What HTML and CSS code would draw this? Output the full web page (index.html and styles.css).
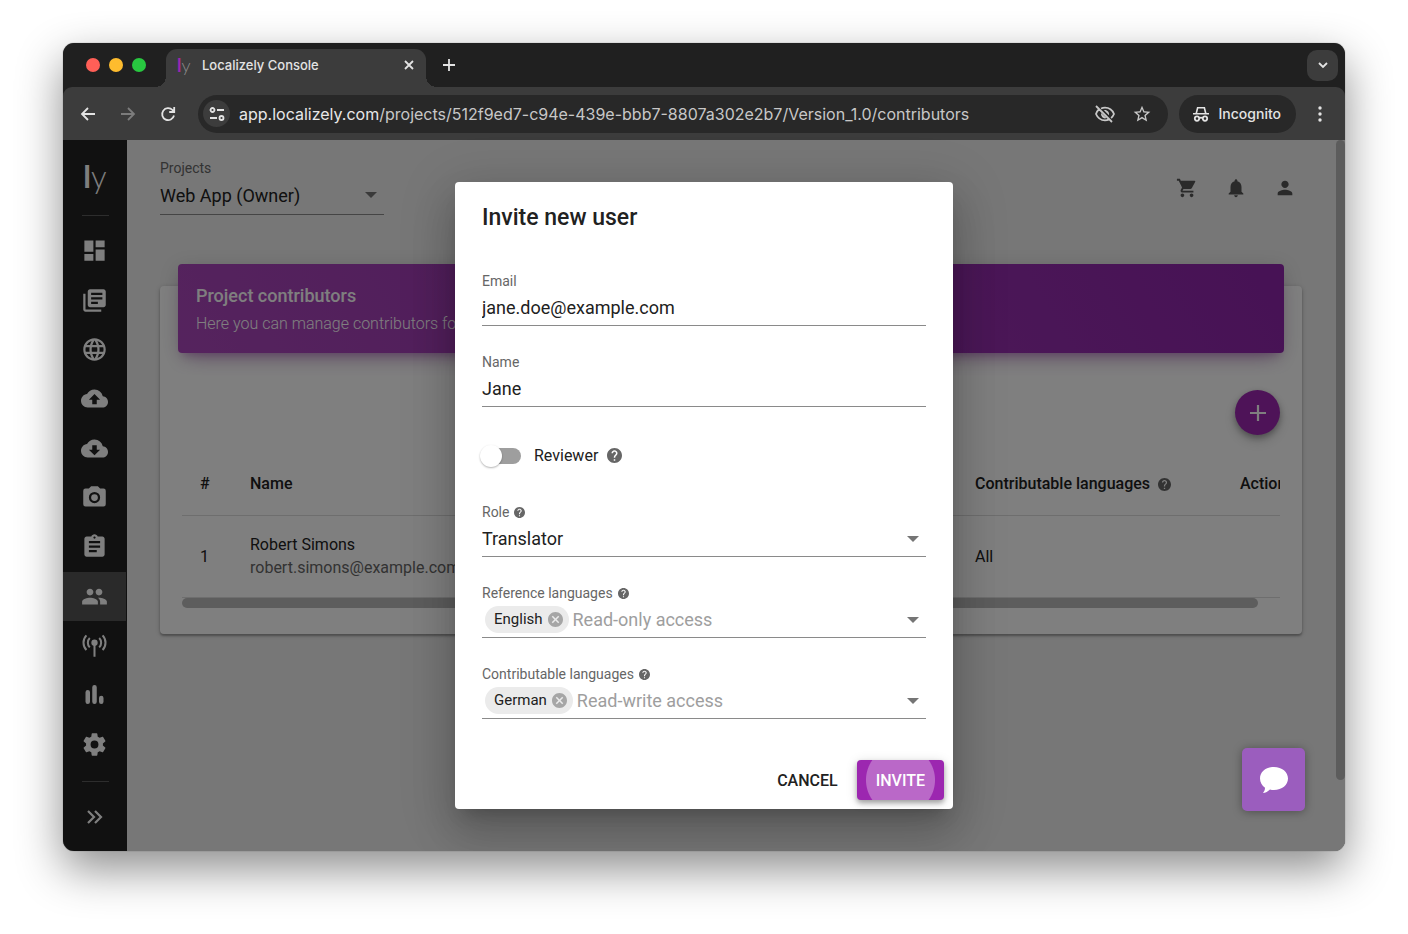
FILE: index.html
```
<!DOCTYPE html>
<html lang="en">
	<head>
		<meta charset="utf-8">
		<title>Localizely Console</title>
		<link rel="stylesheet" href="styles.css">
	</head>
	<body>
		<svg class="sprite" aria-hidden="true">
			<symbol id="help" viewBox="2 2 20 20"><path d="M12 2C6.48 2 2 6.48 2 12s4.48 10 10 10 10-4.48 10-10S17.52 2 12 2zm1 17h-2v-2h2v2zm2.07-7.75l-.9.92C13.45 12.9 13 13.5 13 15h-2v-.5c0-1.1.45-2.1 1.17-2.83l1.24-1.26c.37-.36.59-.86.59-1.41 0-1.1-.9-2-2-2s-2 .9-2 2H8c0-2.21 1.79-4 4-4s4 1.79 4 4c0 .88-.36 1.68-.93 2.25z"/></symbol>
			<symbol id="cancel" viewBox="2 2 20 20"><path d="M12 2C6.47 2 2 6.47 2 12s4.47 10 10 10 10-4.47 10-10S17.53 2 12 2zm5 13.59L15.59 17 12 13.41 8.41 17 7 15.59 10.59 12 7 8.41 8.41 7 12 10.59 15.59 7 17 8.41 13.41 12 17 15.59z"/></symbol>
		</svg>

		<div class="window">
			<div class="tabstrip">
				<div class="lights"><span class="red"></span><span class="yellow"></span><span class="green"></span></div>
				<div class="tab">
					<span class="favicon"><b>l</b><i>y</i></span>
					<span class="tab-title">Localizely Console</span>
					<button class="tab-close" aria-label="Close tab"><svg width="10" height="10" viewBox="0 0 10 10"><path class="line" d="M1 1l8 8M9 1l-8 8"/></svg></button>
				</div>
				<button class="new-tab" aria-label="New tab"><svg width="12" height="12" viewBox="0 0 12 12"><path class="line" d="M6 0v12M0 6h12"/></svg></button>
				<button class="tab-search" aria-label="Search tabs"><svg width="10" height="8" viewBox="0 0 10 8"><path class="line" d="M1 2l4 4 4-4"/></svg></button>
			</div>

			<div class="toolbar">
				<button aria-label="Back"><svg width="16" height="16" viewBox="0 0 16 16"><path class="line" d="M15 8H2M8 2L2 8l6 6"/></svg></button>
				<button class="dim" aria-label="Forward"><svg width="16" height="16" viewBox="0 0 16 16"><path class="line" d="M1 8h13M8 2l6 6-6 6"/></svg></button>
				<button aria-label="Reload"><svg width="16" height="16" viewBox="0 0 16 16"><path class="line" d="M14 9.500A6 6 0 1 1 12.500 4L14 5.500M14.200 1v5h-5"/></svg></button>
				<div class="address">
					<span class="site-info"><svg width="16" height="14" viewBox="0 0 16 14"><g class="line"><circle cx="3.500" cy="3" r="2"/><path d="M8 3h7M1 11h7"/><circle cx="12.500" cy="11" r="2"/></g></svg></span>
					<span class="url"><b>app.localizely.com</b>/projects/512f9ed7-c94e-439e-bbb7-8807a302e2b7/Version_1.0/contributors</span>
					<svg width="22" height="20" viewBox="0 0 22 20"><path class="line" d="M2 2l16 16M7 4.500C8.200 4 9.600 3.700 11 3.700c4 0 7.300 2.200 9 6.300-.7 1.700-1.700 3-2.900 4M4.800 5.500C3.600 6.600 2.600 8.100 2 10c1.700 4.100 5 6.300 9 6.300 1.300 0 2.500-.2 3.600-.7"/><path d="M7.200 9a4 4 0 0 0 5.400 5zM10 6.200l5 5c.6-3-2-5.600-5-5z"/></svg>
					<svg width="20" height="20" viewBox="0 0 24 24"><path d="M22 9.240l-7.190-.62L12 2 9.190 8.630 2 9.240l5.460 4.730L5.820 21 12 17.270 18.180 21l-1.630-7.030L22 9.240zM12 15.400l-3.760 2.270 1-4.280-3.320-2.880 4.380-.38L12 6.100l1.710 4.040 4.380.38-3.320 2.880 1 4.280L12 15.400z"/></svg>
				</div>
				<div class="incognito">
					<svg width="16" height="16" viewBox="0 0 16 16"><path d="M4 1h8l1.500 6H16v1.600H0V7h2.500zm1.300 1.600L4.200 7h7.600l-1.100-4.400z" fill-rule="evenodd"/><g class="line"><circle cx="4" cy="12.600" r="2.200"/><circle cx="12" cy="12.600" r="2.200"/><path d="M6 12.200q2-1 4 0"/></g></svg>
					Incognito
				</div>
				<button class="menu" aria-label="Menu"><svg width="4" height="16" viewBox="0 0 4 16"><circle cx="2" cy="2" r="1.700"/><circle cx="2" cy="8" r="1.700"/><circle cx="2" cy="14" r="1.700"/></svg></button>
			</div>

			<div class="viewport">
				<aside class="sidebar">
					<div class="logo"><b>l</b><i>y</i></div>
					<hr>
					<nav>
						<a href="#" aria-label="Overview"><svg viewBox="0 0 24 24"><path d="M13 3v6h8V3zM13 21h8V11h-8zM3 21h8v-6H3zM3 13h8V3H3z"/></svg></a>
						<a href="#" aria-label="Translations"><svg viewBox="0 0 24 24"><path d="M4 6H2v14c0 1.100.9 2 2 2h14v-2H4V6zm16-4H8c-1.100 0-2 .9-2 2v12c0 1.100.9 2 2 2h12c1.100 0 2-.9 2-2V4c0-1.100-.9-2-2-2zm-1 9H9V9h10v2zm-4 4H9v-2h6v2zm4-8H9V5h10v2z"/></svg></a>
						<a href="#" aria-label="Languages"><svg viewBox="0 0 24 24"><path d="M11.990 2C6.470 2 2 6.480 2 12s4.470 10 9.990 10C17.520 22 22 17.520 22 12S17.520 2 11.990 2zm6.930 6h-2.950c-.32-1.250-.78-2.450-1.380-3.560 1.840.63 3.370 1.910 4.330 3.560zM12 4.040c.83 1.200 1.480 2.530 1.910 3.960h-3.820c.43-1.430 1.080-2.760 1.910-3.960zM4.260 14C4.100 13.360 4 12.690 4 12s.1-1.360.26-2h3.380c-.08.66-.14 1.320-.14 2s.06 1.340.14 2H4.260zm.82 2h2.950c.32 1.250.78 2.450 1.380 3.560-1.840-.63-3.370-1.900-4.330-3.560zm2.950-8H5.080c.96-1.660 2.490-2.930 4.330-3.560C8.810 5.550 8.350 6.750 8.030 8zM12 19.960c-.83-1.200-1.480-2.530-1.910-3.960h3.820c-.43 1.430-1.080 2.760-1.910 3.960zM14.340 14H9.660c-.09-.66-.16-1.320-.16-2s.07-1.350.16-2h4.680c.09.65.16 1.320.16 2s-.07 1.340-.16 2zm.25 5.560c.6-1.110 1.060-2.310 1.380-3.560h2.950c-.96 1.650-2.490 2.930-4.330 3.560zM16.360 14c.08-.66.14-1.320.14-2s-.06-1.340-.14-2h3.380c.16.64.26 1.310.26 2s-.1 1.360-.26 2h-3.380z"/></svg></a>
						<a href="#" aria-label="Upload"><svg viewBox="0 0 24 24"><path d="M19.350 10.040C18.670 6.590 15.640 4 12 4 9.110 4 6.600 5.640 5.350 8.040 2.340 8.360 0 10.910 0 14c0 3.310 2.690 6 6 6h13c2.760 0 5-2.240 5-5 0-2.640-2.050-4.780-4.650-4.960zM14 13v4h-4v-4H7l5-5 5 5h-3z"/></svg></a>
						<a href="#" aria-label="Download"><svg viewBox="0 0 24 24"><path d="M19.350 10.040C18.670 6.590 15.640 4 12 4 9.110 4 6.600 5.640 5.350 8.040 2.340 8.360 0 10.910 0 14c0 3.310 2.690 6 6 6h13c2.760 0 5-2.240 5-5 0-2.640-2.050-4.780-4.650-4.960zM17 13l-5 5-5-5h3V9h4v4h3z"/></svg></a>
						<a href="#" aria-label="Screenshots"><svg viewBox="0 0 24 24"><path fill-rule="evenodd" d="M4 4h3l2-2h6l2 2h3a2 2 0 0 1 2 2v12a2 2 0 0 1-2 2H4a2 2 0 0 1-2-2V6a2 2 0 0 1 2-2zM12 7a5 5 0 1 0 0 10 5 5 0 0 0 0-10zM12 9a3 3 0 1 1 0 6 3 3 0 0 1 0-6z"/></svg></a>
						<a href="#" aria-label="Tasks"><svg viewBox="0 0 24 24"><path d="M19 3h-4.180C14.400 1.840 13.300 1 12 1c-1.300 0-2.400.84-2.820 2H5c-1.100 0-2 .9-2 2v14c0 1.100.9 2 2 2h14c1.100 0 2-.9 2-2V5c0-1.100-.9-2-2-2zm-7 0c.55 0 1 .45 1 1s-.45 1-1 1-1-.45-1-1 .45-1 1-1zm2 14H7v-2h7v2zm3-4H7v-2h10v2zm0-4H7V7h10v2z"/></svg></a>
						<a href="#" class="active" aria-label="Contributors"><svg viewBox="0 0 24 24"><path d="M16 11c1.660 0 2.990-1.340 2.990-3S17.660 5 16 5c-1.660 0-3 1.340-3 3s1.340 3 3 3zm-8 0c1.660 0 2.990-1.340 2.990-3S9.660 5 8 5C6.340 5 5 6.340 5 8s1.340 3 3 3zm0 2c-2.330 0-7 1.170-7 3.500V19h14v-2.500c0-2.330-4.670-3.500-7-3.500zm8 0c-.29 0-.62.02-.97.05 1.160.84 1.970 1.970 1.970 3.450V19h6v-2.500c0-2.330-4.670-3.500-7-3.500z"/></svg></a>
						<a href="#" aria-label="Over-the-air"><svg viewBox="0 0 24 24"><circle cx="12" cy="9.500" r="2.800"/><path class="line" d="M12 10v12M7.800 5.300a6 6 0 0 0 0 8.400M16.200 5.300a6 6 0 0 1 0 8.400M4.800 3a9.500 9.500 0 0 0 0 13M19.200 3a9.500 9.500 0 0 1 0 13"/></svg></a>
						<a href="#" aria-label="Statistics"><svg viewBox="0 0 24 24"><path class="bars" d="M6 10v8.500M12 5.500v13M18 15v3.500"/></svg></a>
						<a href="#" aria-label="Settings"><svg viewBox="0 0 24 24"><path d="M12 15.500A3.500 3.500 0 0 1 8.500 12 3.500 3.500 0 0 1 12 8.500a3.500 3.500 0 0 1 3.500 3.500 3.500 3.500 0 0 1-3.500 3.500m7.430-2.530c.04-.32.07-.64.07-.97s-.03-.66-.07-1l2.110-1.630c.19-.15.24-.42.12-.64l-2-3.460c-.12-.22-.39-.31-.61-.22l-2.490 1c-.52-.39-1.060-.73-1.690-.98l-.37-2.650A.506.506 0 0 0 14 2h-4c-.25 0-.46.18-.5.42l-.37 2.650c-.63.25-1.170.59-1.690.98l-2.490-1c-.22-.09-.49 0-.61.22l-2 3.460c-.13.22-.07.49.12.64L4.570 11c-.04.34-.07.67-.07 1s.03.65.07.97l-2.110 1.660c-.19.15-.25.42-.12.64l2 3.460c.12.22.39.3.61.22l2.490-1.010c.52.4 1.060.74 1.690.99l.37 2.650c.04.24.25.42.5.42h4c.25 0 .46-.18.5-.42l.37-2.650c.63-.26 1.170-.59 1.690-.99l2.490 1.010c.22.08.49 0 .61-.22l2-3.460c.12-.22.07-.49-.12-.64z"/></svg></a>
					</nav>
					<hr>
					<button class="expand" aria-label="Expand sidebar"><svg width="18" height="16" viewBox="0 0 18 16"><path class="line" d="M2 2l6 6-6 6M9 2l6 6-6 6"/></svg></button>
				</aside>

				<main>
					<header>
						<div class="field project">
							<label for="project">Projects</label>
							<div class="control select"><select id="project"><option>Web App (Owner)</option></select></div>
						</div>
						<div class="actions">
							<button aria-label="Cart"><svg width="22" height="22" viewBox="0 0 24 24"><path d="M7 18c-1.100 0-1.990.9-1.990 2S5.900 22 7 22s2-.9 2-2-.9-2-2-2zM1 2v2h2l3.600 7.590-1.350 2.450c-.16.28-.25.61-.25.96 0 1.100.9 2 2 2h12v-2H7.420c-.14 0-.25-.11-.25-.25l.03-.12.9-1.630h7.450c.75 0 1.410-.41 1.750-1.030l3.580-6.490A1.003 1.003 0 0 0 20 4H5.210l-.94-2H1zm16 16c-1.100 0-1.990.9-1.990 2s.89 2 1.990 2 2-.9 2-2-.9-2-2-2z"/></svg></button>
							<button aria-label="Notifications"><svg width="22" height="22" viewBox="0 0 24 24"><path d="M12 22c1.100 0 2-.9 2-2h-4c0 1.100.89 2 2 2zm6-6v-5c0-3.070-1.640-5.640-4.500-6.320V4c0-.83-.67-1.500-1.500-1.500s-1.500.67-1.500 1.500v.68C7.630 5.360 6 7.920 6 11v5l-2 2v1h16v-1l-2-2z"/></svg></button>
							<button aria-label="Account"><svg width="22" height="22" viewBox="0 0 24 24"><path d="M12 12c2.210 0 4-1.790 4-4s-1.790-4-4-4-4 1.790-4 4 1.790 4 4 4zm0 2c-2.670 0-8 1.340-8 4v2h16v-2c0-2.660-5.330-4-8-4z"/></svg></button>
						</div>
					</header>

					<section class="card">
						<div class="banner">
							<h1>Project contributors</h1>
							<p>Here you can manage contributors for your project</p>
						</div>
						<div class="card-body">
							<button class="add" aria-label="Add contributor"><svg width="16" height="16" viewBox="0 0 16 16"><path class="line" d="M8 0v16M0 8h16"/></svg></button>
							<div class="table-wrap">
								<table>
									<thead>
										<tr>
											<th class="col-num">#</th>
											<th>Name</th>
											<th class="col-lang">Contributable languages <svg class="help" width="13" height="13"><use href="#help"/></svg></th>
											<th class="col-actions">Actions</th>
										</tr>
									</thead>
									<tbody>
										<tr>
											<td>1</td>
											<td>Robert Simons<br><span class="email">robert.simons@example.com</span></td>
											<td>All</td>
											<td></td>
										</tr>
									</tbody>
								</table>
							</div>
							<div class="scroll-x"></div>
						</div>
					</section>
				</main>
				<div class="scroll-y"></div>

				<div class="overlay">
					<form class="dialog" role="dialog" aria-labelledby="dialog-title">
						<h2 id="dialog-title">Invite new user</h2>
						<div class="fields">
							<div class="field">
								<label for="email">Email</label>
								<div class="control"><input id="email" type="email" value="jane.doe@example.com"></div>
							</div>
							<div class="field">
								<label for="name">Name</label>
								<div class="control"><input id="name" type="text" value="Jane"></div>
							</div>
							<div class="switch">
								<input id="reviewer" type="checkbox">
								<label for="reviewer">Reviewer</label>
								<svg class="help" width="15" height="15"><use href="#help"/></svg>
							</div>
							<div class="field">
								<label for="role">Role <svg class="help" width="11" height="11"><use href="#help"/></svg></label>
								<div class="control select"><select id="role"><option>Translator</option></select></div>
							</div>
							<div class="field">
								<label for="reference">Reference languages <svg class="help" width="11" height="11"><use href="#help"/></svg></label>
								<div class="control select">
									<span class="chip">English <button type="button" aria-label="Remove English"><svg width="15" height="15"><use href="#cancel"/></svg></button></span>
									<input id="reference" type="text" placeholder="Read-only access">
								</div>
							</div>
							<div class="field">
								<label for="contributable">Contributable languages <svg class="help" width="11" height="11"><use href="#help"/></svg></label>
								<div class="control select">
									<span class="chip">German <button type="button" aria-label="Remove German"><svg width="15" height="15"><use href="#cancel"/></svg></button></span>
									<input id="contributable" type="text" placeholder="Read-write access">
								</div>
							</div>
						</div>
						<div class="buttons">
							<button type="button" class="btn">CANCEL</button>
							<button type="button" class="btn primary">INVITE</button>
						</div>
					</form>
				</div>

				<button class="chat" aria-label="Chat"><svg width="30" height="28" viewBox="0 0 30 28"><path d="M15 1c8 0 14 5 14 11.500S23 24 15 24c-1.500 0-2.800-.1-4-.5-2 2-4.500 3.300-7 3.500 1.200-1.400 2-3 2-5.200C3 19.500 1 16.300 1 12.500 1 6 7 1 15 1z"/></svg></button>
			</div>
		</div>
	</body>
</html>
```
FILE: styles.css
```
* {
	box-sizing: border-box;
}

body {
	margin: 0;
	padding: 43px 63px 83px;
	height: 100vh;
	min-height: 760px;
	background: #fff;
	color: #212121;
	font-family: Roboto, "Liberation Sans", sans-serif;
	font-size: 16px;
}

h1, h2, p {
	margin: 0;
}

button, input, select {
	font: inherit;
	color: inherit;
	background: none;
	border: 0;
	padding: 0;
	margin: 0;
}

input, select {
	appearance: none;
	outline: 0;
	min-width: 0;
}

svg {
	display: block;
	flex: none;
	fill: currentColor;
}

.sprite {
	display: none;
}

.line {
	fill: none;
	stroke: currentColor;
	stroke-width: 1.8;
}

/* browser window */

.window {
	display: flex;
	flex-direction: column;
	height: 100%;
	border-radius: 11px;
	overflow: hidden;
	background: #202020;
	box-shadow: 0 0 1px rgba(0, 0, 0, 0.6), 0 18px 46px rgba(0, 0, 0, 0.45);
}

.tabstrip, .toolbar {
	font-family: Inter, "Liberation Sans", sans-serif;
	color: #e3e3e3;
	display: flex;
	align-items: center;
}

.tabstrip {
	height: 44px;
	padding: 0 7px 0 23px;
}

.lights {
	display: flex;
	gap: 9px;
}

.lights span {
	width: 14px;
	height: 14px;
	border-radius: 50%;
}

.red {
	background: #ff5f57;
}

.yellow {
	background: #febc2e;
}

.green {
	background: #28c840;
}

.tab {
	position: relative;
	display: flex;
	align-items: center;
	align-self: flex-end;
	width: 260px;
	height: 38px;
	margin-left: 20px;
	padding: 0 12px 6px 11px;
	border-radius: 11px 11px 0 0;
	background: #3c3c3c;
}

.tab::before,
.tab::after {
	content: "";
	position: absolute;
	bottom: 0;
	width: 11px;
	height: 11px;
}

.tab::before {
	right: 100%;
	background: radial-gradient(circle at 0 0, transparent 11px, #3c3c3c 11px);
}

.tab::after {
	left: 100%;
	background: radial-gradient(circle at 100% 0, transparent 11px, #3c3c3c 11px);
}

.favicon, .logo {
	font-family: Lato, sans-serif;
}

.favicon b, .logo b {
	font-weight: 700;
}

.favicon i, .logo i {
	font-style: normal;
	font-weight: 300;
}

.favicon {
	width: 25px;
	font-size: 18px;
	line-height: 20px;
	color: #8a8a8a;
}

.favicon b {
	color: #9c27b0;
}

.tab-title {
	flex: 1;
	font-size: 13px;
	font-weight: 500;
}

.new-tab {
	margin-left: 17px;
}

.tab-search {
	display: flex;
	align-items: center;
	justify-content: center;
	width: 31px;
	height: 31px;
	margin-left: auto;
	border-radius: 10px;
	background: #3c3c3c;
}

.toolbar {
	height: 53px;
	padding: 0 20px 0 17px;
	border-radius: 9px 9px 0 0;
	background: #3c3c3c;
	gap: 24px;
}

.dim {
	color: #7c7c7c;
}

.address {
	flex: 1;
	display: flex;
	align-items: center;
	gap: 16px;
	min-width: 0;
	height: 38px;
	margin-left: -2px;
	padding: 0 16px 0 5px;
	border-radius: 19px;
	background: #282828;
	color: #c7c7c7;
}

.site-info {
	display: flex;
	align-items: center;
	justify-content: center;
	flex: none;
	width: 27px;
	height: 27px;
	margin-right: -7px;
	border-radius: 50%;
	background: #3c3c3c;
	color: #e3e3e3;
}

.url {
	flex: 1;
	font-size: 16px;
	white-space: nowrap;
	overflow: hidden;
}

.url b {
	font-weight: 400;
	color: #e8e8e8;
}

.incognito {
	display: flex;
	align-items: center;
	gap: 10px;
	height: 38px;
	margin-left: -13px;
	padding: 0 15px 0 14px;
	border-radius: 19px;
	background: #282828;
	font-size: 14px;
	font-weight: 500;
}

.menu {
	width: 9px;
	margin-left: -4px;
	padding-left: 2px;
}

/* app */

.viewport {
	position: relative;
	flex: 1;
	display: flex;
	min-height: 0;
	background: #eee;
}

.sidebar {
	flex: none;
	display: flex;
	flex-direction: column;
	width: 64px;
	background: #222;
	color: #fff;
}

.sidebar hr {
	width: 27px;
	height: 1px;
	margin: 0 auto;
	border: 0;
	background: #5a5a5a;
}

.logo {
	height: 75px;
	font-size: 31px;
	line-height: 72px;
	text-align: center;
}

.sidebar nav {
	flex: 1;
	display: flex;
	flex-direction: column;
	padding: 10px 0 12px;
}

.sidebar nav a {
	flex: 1;
	display: flex;
	align-items: center;
	justify-content: center;
	margin-right: 1px;
	color: #fff;
}

.sidebar nav svg {
	width: 27px;
	height: 27px;
}

.sidebar nav .active {
	background: #555;
}

.bars {
	fill: none;
	stroke: currentColor;
	stroke-width: 4;
	stroke-linecap: round;
}

.expand {
	height: 69px;
	margin: 0 auto;
}

.expand .line {
	stroke-width: 2.2;
}

main {
	flex: 1;
	min-width: 0;
	padding: 20px 34px 0 33px;
}

header {
	display: flex;
	justify-content: space-between;
	align-items: center;
}

.actions {
	display: flex;
	gap: 15px;
	color: #555;
}

.actions button {
	display: flex;
	justify-content: center;
	width: 34px;
}

.field label {
	display: flex;
	align-items: center;
	gap: 5px;
	font-size: 14px;
	line-height: 16px;
	color: #666;
}

.help {
	color: #666;
}

.control {
	position: relative;
	display: flex;
	align-items: center;
	height: 37px;
	border-bottom: 1px solid #8a8a8a;
	font-size: 18px;
}

.control input,
.control select {
	flex: 1;
	height: 36px;
}

.control input::placeholder {
	color: #9e9e9e;
	opacity: 1;
}

.select::after {
	content: "";
	position: absolute;
	right: 7px;
	top: 16px;
	border: 6px solid transparent;
	border-top-color: #757575;
	border-bottom: 0;
	pointer-events: none;
}

.project {
	width: 224px;
}

.project .control {
	height: 39px;
}

.card {
	margin-top: 71px;
	border-radius: 4px;
	background: #fff;
	box-shadow: 0 2px 2px rgba(0, 0, 0, 0.25), 0 1px 5px rgba(0, 0, 0, 0.2);
}

.banner {
	position: relative;
	top: -22px;
	height: 89px;
	margin: 0 18px -22px;
	padding: 18px;
	border-radius: 4px;
	background: linear-gradient(60deg, #ab47bc, #8e24aa);
	box-shadow: 0 12px 20px -10px rgba(156, 39, 176, 0.4), 0 4px 20px rgba(0, 0, 0, 0.14), 0 7px 8px -5px rgba(156, 39, 176, 0.3);
	color: #fff;
	white-space: nowrap;
	overflow: hidden;
}

.banner h1 {
	font-size: 18px;
	font-weight: 500;
	line-height: 28px;
}

.banner p {
	font-size: 16px;
	font-weight: 300;
	line-height: 28px;
}

.card-body {
	display: flex;
	flex-direction: column;
	padding: 37px 22px 26px;
}

.add {
	align-self: flex-end;
	display: flex;
	align-items: center;
	justify-content: center;
	width: 45px;
	height: 45px;
	margin-bottom: 17px;
	border-radius: 50%;
	background: #9c27b0;
	box-shadow: 0 3px 6px rgba(0, 0, 0, 0.3), 0 6px 14px rgba(0, 0, 0, 0.15);
	color: #fff;
}

.add .line {
	stroke-width: 2.2;
}

.table-wrap {
	overflow: hidden;
}

table {
	width: calc(100% + 26px);
	table-layout: fixed;
	border-collapse: collapse;
	white-space: nowrap;
	line-height: 23px;
}

th, td {
	padding: 0 18px;
	border-bottom: 1px solid #ddd;
	text-align: left;
}

th {
	height: 63px;
	font-weight: 500;
}

td {
	height: 82px;
}

th .help {
	display: inline-block;
	vertical-align: -2px;
	margin-left: 4px;
}

.col-num {
	width: 50px;
}

.col-lang {
	width: 265px;
}

.col-actions {
	width: 84px;
}

.email {
	color: #666;
}

.scroll-x {
	width: 98%;
	height: 10px;
	border-radius: 5px;
	background: #bbb;
}

.scroll-y {
	width: 9px;
	height: 90%;
	border-radius: 5px;
	background: #b8b8b8;
}

/* dialog */

.overlay {
	position: absolute;
	inset: 0;
	display: flex;
	align-items: center;
	justify-content: center;
	background: rgba(0, 0, 0, 0.5);
}

.dialog {
	width: 498px;
	max-width: 90%;
	padding: 20px 9px 9px 27px;
	border-radius: 4px;
	background: #fff;
	box-shadow: 0 12px 17px -8px rgba(0, 0, 0, 0.2), 0 27px 43px 3px rgba(0, 0, 0, 0.14), 0 10px 52px 9px rgba(0, 0, 0, 0.12);
}

.dialog h2 {
	margin-bottom: 39px;
	font-size: 23px;
	font-weight: 500;
	line-height: 32px;
}

.fields {
	display: flex;
	flex-direction: column;
	gap: 28px;
	margin-right: 18px;
}

.switch {
	display: flex;
	align-items: center;
	height: 41px;
}

.switch input {
	position: relative;
	width: 35px;
	height: 16px;
	margin: 0 13px 0 4px;
	border-radius: 8px;
	background: #9e9e9e;
}

.switch input::before {
	content: "";
	position: absolute;
	top: -3px;
	left: -6px;
	width: 22px;
	height: 22px;
	border-radius: 50%;
	background: #fff;
	box-shadow: 0 1px 2px rgba(0, 0, 0, 0.3);
}

.switch .help {
	margin-left: 9px;
}

.chip {
	display: flex;
	align-items: center;
	gap: 5px;
	height: 27px;
	margin: 0 4px 0 3px;
	padding: 0 6px 0 9px;
	border-radius: 14px;
	background: #ebebeb;
	font-size: 15px;
}

.chip button {
	color: #a6a6a6;
}

.buttons {
	display: flex;
	justify-content: flex-end;
	margin-top: 41px;
}

.btn {
	height: 40px;
	padding: 0 19px;
	border-radius: 4px;
	font-weight: 500;
}

.primary {
	background: #9c27b0 radial-gradient(circle at 50% 50%, #ba68c8 34px, transparent 35px);
	box-shadow: 0 3px 5px rgba(0, 0, 0, 0.3), 0 2px 12px rgba(0, 0, 0, 0.15);
	color: #fff;
}

.chat {
	position: absolute;
	right: 40px;
	bottom: 40px;
	display: flex;
	align-items: center;
	justify-content: center;
	width: 63px;
	height: 63px;
	border-radius: 5px;
	background: #9b5dbe;
	box-shadow: 0 1px 10px rgba(0, 0, 0, 0.35);
	color: #fff;
}
```
